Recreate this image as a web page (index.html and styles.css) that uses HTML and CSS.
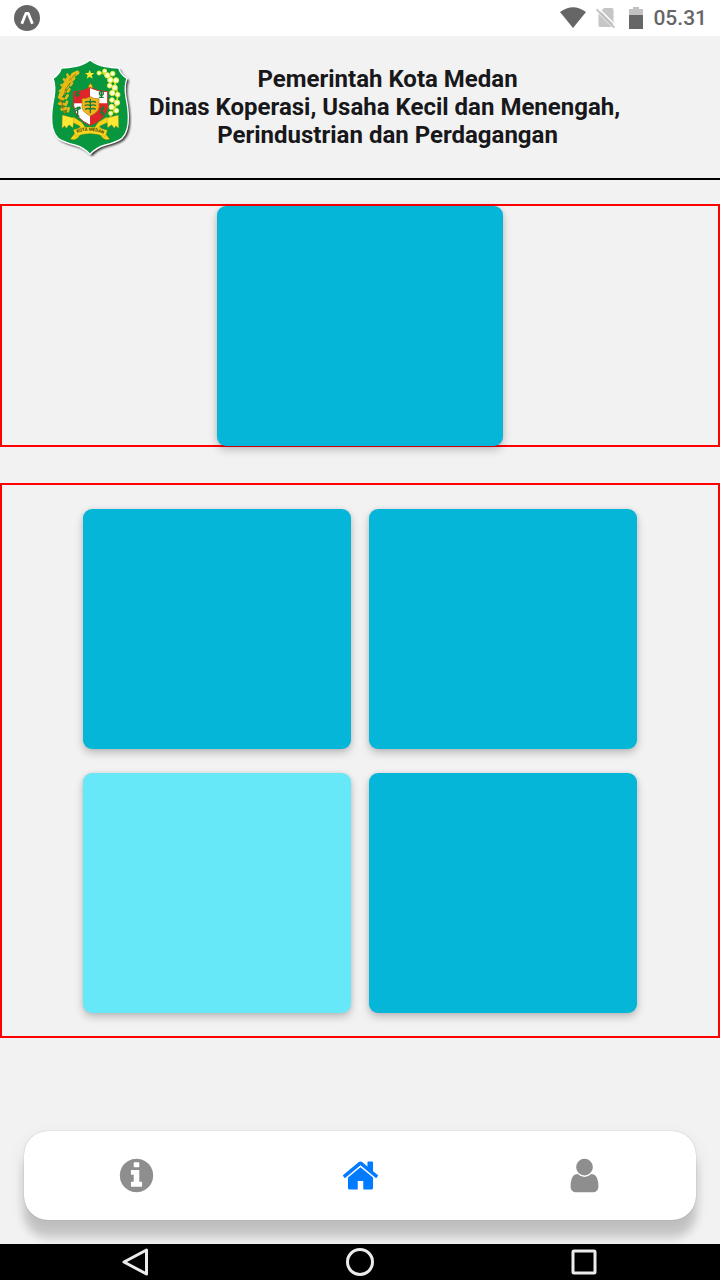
FILE: index.html
```html
<!DOCTYPE html>
<html lang="id">
<head>
<meta charset="utf-8">
<meta name="viewport" content="width=device-width, initial-scale=1">
<title>Pemerintah Kota Medan</title>
<link rel="stylesheet" href="styles.css">
</head>
<body>
<div class="app">
  <div class="status">
    <svg class="status-app" viewBox="0 0 26 26" aria-hidden="true">
      <circle cx="13" cy="13" r="13" fill="#666"/>
      <path d="M7.800 18.800L12 8.300h2.200L18.400 18.800" fill="none" stroke="#fff" stroke-width="2.800" stroke-linejoin="round"/>
    </svg>
    <div class="status-right">
      <svg class="status-wifi" viewBox="0 0 26 22" aria-hidden="true"><path d="M0 5Q13-4.500 26 5L13 21z" fill="#666"/></svg>
      <svg class="status-sim" viewBox="0 0 20 22" aria-hidden="true">
        <path d="M8 1h8q1.500 0 1.500 1.500V17L4.500 4.500zM2.500 6.500L16 20H4q-1.500 0-1.500-1.500z" fill="#c6c6c6"/>
        <path d="M5 5L17 17" stroke="#c6c6c6" stroke-width="4"/>
        <path d="M2 .800L19.500 18.300" stroke="#fff" stroke-width="1.400"/>
        <path d="M.500 2.300L18.500 20.600" stroke="#bdbdbd" stroke-width="1.800"/>
      </svg>
      <svg class="status-battery" viewBox="0 0 14 22" aria-hidden="true">
        <path d="M0 2h4V0h6v2h4v7H0z" fill="#c2c2c2"/><path d="M0 8h14v14H0z" fill="#666"/>
      </svg>
      <span class="clock">05.31</span>
    </div>
  </div>

  <header class="header">
    <svg class="emblem" viewBox="30 27 246 297" role="img" aria-label="Lambang Kota Medan">
      <defs>
        <path id="shield" d="M150 33Q132 47 108 52Q84 57 64 57Q58 77 39 88Q48 113 42 145Q35 180 35 205Q34 248 54 268Q72 280 104 288Q132 296 150 316Q168 296 196 288Q228 280 246 268Q266 248 265 205Q265 180 258 145Q252 113 261 88Q242 77 236 57Q216 57 192 52Q168 47 150 33z"/>
        <path id="motto" d="M105 254Q150 235 196 257"/>
        <filter id="soft"><feGaussianBlur stdDeviation="2.500"/></filter>
      </defs>
      <use href="#shield" x="6" y="6" fill="#333" filter="url(#soft)"/>
      <use href="#shield" fill="#08963f" stroke="#fff" stroke-width="4"/>
      <path d="M149 63l4 9h10l-8 7 3 10-9-6-9 6 3-10-8-7h10z" fill="#ffe92e"/>
      <g fill="none" stroke-linecap="round">
        <path d="M107 74Q70 92 63 130Q58 160 75 190" stroke="#a87906" stroke-width="7"/>
        <path d="M112 71l-13 7M99 83l-15 7M89 96l-14 10M82 111l-14 12M73 127l-11 11" stroke="#e8bd14" stroke-width="13"/>
        <path d="M82 77l6 11M72 91l9 10M65 108l10 9M60 126l11 8M57 145l13 5M58 164l13 1M65 181l13-3M98 93l4-5M92 108l4-6M84 128l4-7M78 147l5-8M77 168l4-10M84 187l2-10" stroke="#e4b817" stroke-width="8"/>
        <path d="M106 76L88 94M91 101L75 123M78 122L69 144M66 154l3 26" stroke="#705512" stroke-width="2"/>
        <path d="M181 71Q218 78 228 112Q242 162 211 201" stroke="#b9d91d" stroke-width="5"/>
      </g>
      <g fill="#f9ffdc" stroke="#e9ed32" stroke-width="3">
        <circle cx="177" cy="72" r="6"/><circle cx="194" cy="66" r="6"/><circle cx="202" cy="79" r="8"/>
        <circle cx="218" cy="74" r="7"/><circle cx="211" cy="93" r="8"/><circle cx="228" cy="94" r="8"/>
        <circle cx="209" cy="110" r="7"/><circle cx="224" cy="116" r="8"/><circle cx="217" cy="132" r="8"/>
        <circle cx="233" cy="137" r="7"/><circle cx="216" cy="153" r="7"/><circle cx="231" cy="161" r="8"/>
        <circle cx="215" cy="174" r="8"/><circle cx="229" cy="185" r="7"/><circle cx="212" cy="193" r="6"/>
      </g>
      <path d="M143 130l3-20 5-7 6 7 3 20z" fill="#f2c71e" stroke="#927508" stroke-width="2"/>
      <path d="M100 204l25 16 12 16-24 31q-10 9-22 3l30-38-31-15zM200 204l-25 16-12 16 25 31q10 9 21 3l-31-38 32-15z" fill="#f6d51a" stroke="#947908" stroke-width="1"/>
      <path d="M67 198l34 9-2 29-12-9-8 11-5-8-8 8zM235 198l-34 9 2 29 12-9 8 11 4-8 9 8z" fill="#ffe833" stroke="#a28a09"/>
      <path d="M101 128Q128 128 150 116V171H101z" fill="#df242a"/>
      <path d="M150 116Q174 128 203 128V165H150z" fill="#fff"/>
      <path d="M101 163h49v65Q104 208 101 163z" fill="#fff"/>
      <path d="M150 163h53v8q-3 38-53 58z" fill="#df242a"/>
      <path d="M101 128Q128 128 150 116Q174 128 203 128V171Q200 208 151 229Q104 208 101 171z" fill="none" stroke="#d92a24" stroke-width="3"/>
      <path d="M126 149Q140 150 151 143Q163 151 177 149V175Q175 190 151 201Q128 190 126 175z" fill="#f4b51b" stroke="#aa780b" stroke-width="2"/>
      <g stroke="#187b32" stroke-width="4" fill="none">
        <path d="M151 149v44M135 160q8-5 16 0 9-5 17 0M134 170q9-5 17 0 8-5 17 0M135 181q9-5 16 0 8-5 16 0"/>
        <path d="M113 124v21M106 130l14 10M119 127l-13 14M113 173v30M104 180l17-6M104 187l19-10M108 201h10M184 127v17M177 145h14M187 171v31M180 178l13 17M193 174l-14 21"/>
        <circle cx="184" cy="133" r="6"/>
      </g>
      <path d="M100 242Q151 225 202 244L196 263Q150 245 107 262z" fill="#f5d51d" stroke="#ad8d08" stroke-width="1"/>
      <text class="motto"><textPath href="#motto" startOffset="50%" text-anchor="middle">KOTA MEDAN</textPath></text>
    </svg>
    <h1 class="title">Pemerintah Kota Medan<br>Dinas Koperasi, Usaha Kecil dan Menengah,&nbsp;<br>Perindustrian dan Perdagangan</h1>
  </header>

  <main class="main">
    <section class="panel panel-hero"><button class="card card-hero" type="button" aria-label="Menu utama"></button></section>
    <section class="panel panel-grid">
      <button class="card" type="button" aria-label="Menu 1"></button>
      <button class="card" type="button" aria-label="Menu 2"></button>
      <button class="card card-light" type="button" aria-label="Menu 3"></button>
      <button class="card" type="button" aria-label="Menu 4"></button>
    </section>
  </main>

  <nav class="tabs">
    <a class="tab" href="#info" aria-label="Informasi"><svg class="tab-icon" viewBox="0 0 1792 1792"><path d="M1152 1376v-160q0-14-9-23t-23-9h-96v-512q0-14-9-23t-23-9h-320q-14 0-23 9t-9 23v160q0 14 9 23t23 9h96v320h-96q-14 0-23 9t-9 23v160q0 14 9 23t23 9h448q14 0 23-9t9-23zm-128-896v-160q0-14-9-23t-23-9h-192q-14 0-23 9t-9 23v160q0 14 9 23t23 9h192q14 0 23-9t9-23zm640 416q0 209-103 385.500t-279.500 279.500-385.500 103-385.500-103-279.500-279.500-103-385.500 103-385.500 279.500-279.500 385.500-103 385.500 103 279.500 279.500 103 385.500z"/></svg></a>
    <a class="tab tab-active" href="#home" aria-label="Beranda" aria-current="page"><svg class="tab-icon" viewBox="0 0 1792 1792"><path d="M1472 992v480q0 26-19 45t-45 19h-384v-384h-256v384h-384q-26 0-45-19t-19-45v-480q0-1 .5-3t.5-3l575-474 575 474q1 2 1 6zm223-69l-62 74q-8 9-21 11h-3q-13 0-21-7l-692-577-692 577q-12 8-24 7-13-2-21-11l-62-74q-8-10-7-23.500t11-21.500l719-599q32-26 76-26t76 26l244 204v-195q0-14 9-23t23-9h192q14 0 23 9t9 23v408l219 182q10 8 11 21.500t-7 23.500z"/></svg></a>
    <a class="tab" href="#profile" aria-label="Profil"><svg class="tab-icon" viewBox="0 0 1792 1792"><path d="M1536 1399q0 109-62.500 187t-150.500 78h-854q-88 0-150.500-78t-62.500-187q0-85 8.500-160.500t31.500-152 58.500-131 94-89 134.500-34.500q131 128 313 128t313-128q76 0 134.500 34.500t94 89 58.500 131 31.500 152 8.500 160.500zm-256-887q0 159-112.500 271.500t-271.500 112.500-271.500-112.500-112.500-271.500 112.500-271.500 271.500-112.500 271.500 112.500 112.500 271.500z"/></svg></a>
  </nav>

  <div class="system">
    <button class="system-button" type="button" aria-label="Kembali"><svg class="system-icon" viewBox="0 0 30 30"><path d="M25.500 3v24L3 15z"/></svg></button>
    <button class="system-button" type="button" aria-label="Layar utama"><svg class="system-icon" viewBox="0 0 30 30"><circle cx="15" cy="15" r="12.500"/></svg></button>
    <button class="system-button" type="button" aria-label="Aplikasi terbaru"><svg class="system-icon" viewBox="0 0 30 30"><rect x="4" y="4" width="22" height="22" rx="1"/></svg></button>
  </div>
</div>
</body>
</html>
```

FILE: styles.css
```css
* { box-sizing: border-box; }

body {
  margin: 0;
  background: #f2f2f2;
  font-family: Roboto, "Liberation Sans", sans-serif;
}

button {
  border: 0;
  padding: 0;
  cursor: pointer;
}

.app {
  display: flex;
  flex-direction: column;
  min-height: 100vh;
}

.status {
  display: flex;
  align-items: center;
  justify-content: space-between;
  height: 36px;
  padding: 0 13px 0 14px;
  background: #fff;
}

.status-app { width: 26px; height: 26px; }

.status-right {
  display: flex;
  align-items: center;
  gap: 10px;
}

.status-wifi { width: 26px; height: 22px; }
.status-sim { width: 20px; height: 22px; }
.status-battery { width: 14px; height: 22px; margin-left: 3px; }

.clock {
  font-size: 21px;
  line-height: 38px;
  font-weight: 500;
  color: #666;
}

.header {
  display: flex;
  align-items: center;
  gap: 17px;
  padding: 20px 50px;
  min-height: 144px;
  border-bottom: 2px solid #000;
}

.emblem {
  flex: none;
  width: 82px;
  height: 99px;
}

.motto {
  font: bold 13px Roboto, sans-serif;
  fill: #433c05;
}

.title {
  margin: 0;
  font-size: 24px;
  line-height: 28px;
  font-weight: 700;
  text-align: center;
  color: #18181b;
}

.main {
  flex: 1;
  display: flex;
  flex-direction: column;
  gap: 36px;
  padding: 24px 0;
}

.panel { border: 2px solid #f00; }

.panel-hero {
  display: flex;
  justify-content: center;
}

.panel-grid {
  display: grid;
  grid-template-columns: 1fr 1fr;
  gap: 24px 18px;
  padding: 24px 81px 23px;
}

.card {
  height: 240px;
  border-radius: 9px;
  background: #06b6d8;
  box-shadow: 0 4px 8px rgba(0, 0, 0, 0.22), 0 0 4px rgba(0, 0, 0, 0.08);
}

.card-hero {
  width: 40%;
  margin-bottom: -1px;
}

.card-light { background: #67e8f9; }

.tabs {
  display: flex;
  height: 89px;
  margin: 0 24px 24px;
  border-radius: 24px;
  background: #fff;
  box-shadow: 0 18px 10px rgba(0, 0, 0, 0.17), 0 6px 18px rgba(0, 0, 0, 0.08), 0 0 1px rgba(0, 0, 0, 0.3);
}

.tab {
  flex: 1;
  display: flex;
  align-items: center;
  justify-content: center;
  color: #8e8e8f;
}

.tab-active { color: #007aff; }

.tab-icon {
  width: 39px;
  height: 39px;
  fill: currentColor;
}

.system {
  position: relative;
  display: flex;
  justify-content: center;
  height: 36px;
  padding: 0 24px;
  background: #000;
}

.system-button {
  flex: 1;
  display: flex;
  align-items: center;
  justify-content: center;
  background: transparent;
}

.system-icon {
  width: 30px;
  height: 30px;
  fill: none;
  stroke: #ececec;
  stroke-width: 3;
  stroke-linejoin: round;
}
```
